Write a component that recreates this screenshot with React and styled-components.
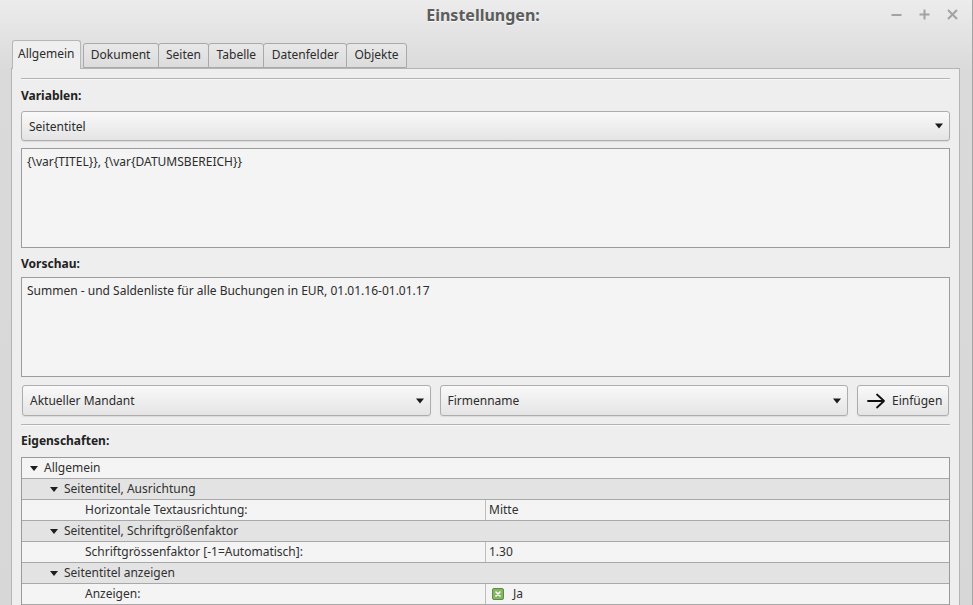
import React from 'react';
import styled, { createGlobalStyle } from 'styled-components';

const GlobalStyle = createGlobalStyle`
  html, body {
    margin: 0;
    padding: 0;
    background: #d6d6d6;
  }
  body {
    font-family: 'Noto Sans', 'DejaVu Sans', sans-serif;
    font-size: 12px;
    color: #303030;
  }
`;

const Window = styled.div`
  width: 972px;
  height: 605px;
  overflow: hidden;
  display: flex;
  flex-direction: column;
  border-right: 1px solid #a3a3a3;
  background: linear-gradient(#ececec, #dadada 70px, #d7d7d7);
`;

const TitleBar = styled.div`
  position: relative;
  height: 29px;
  display: flex;
  align-items: center;
  justify-content: center;
  flex-shrink: 0;
`;

const Title = styled.div`
  font-size: 16px;
  font-weight: 700;
  color: #5c5c5c;
  text-shadow: 0 1px 0 rgba(255, 255, 255, 0.7);
  margin-left: -6px;
`;

const Controls = styled.div`
  position: absolute;
  right: 14px;
  top: 9px;
  display: flex;
  gap: 17px;
`;

const Body = styled.div`
  flex: 1;
  padding: 11px 12px 0 11px;
  display: flex;
  flex-direction: column;
  min-height: 0;
`;

const TabBar = styled.div`
  display: flex;
  align-items: flex-end;
  height: 28px;
  padding-left: 1px;
  position: relative;
  z-index: 1;
`;

const Tab = styled.div`
  box-sizing: border-box;
  height: ${(p) => (p.active ? '29px' : '25px')};
  margin-bottom: ${(p) => (p.active ? '-1px' : '0')};
  margin-right: ${(p) => (p.active ? '2px' : '-1px')};
  padding: ${(p) => (p.active ? '4px 5px 0' : '2px 7.3px 0')};
  border: 1px solid ${(p) => (p.active ? '#b6b6b6' : '#a9a9a9')};
  border-bottom: ${(p) => (p.active ? 'none' : '1px solid #a9a9a9')};
  border-radius: 3px 3px 0 0;
  background: ${(p) =>
    p.active ? '#efefef' : 'linear-gradient(#e8e8e8, #dcdcdc)'};
  color: #2c2c2c;
  line-height: 18px;
  white-space: nowrap;
`;

const Panel = styled.div`
  flex: 1;
  border: 1px solid #b4b4b4;
  border-bottom: none;
  background: #eeeeee;
  padding: 9px 9px 0;
  display: flex;
  flex-direction: column;
  min-height: 0;
`;

const Separator = styled.div`
  height: 1px;
  background: #b4b4b4;
  box-shadow: 0 1px 0 #f8f8f8;
  flex-shrink: 0;
`;

const Label = styled.div`
  font-weight: 700;
  color: #222;
  line-height: 16px;
  padding: ${(p) => p.pad || '9px 0 7px'};
`;

const Combo = styled.div`
  box-sizing: border-box;
  flex: ${(p) => (p.grow ? 1 : 'none')};
  height: ${(p) => p.h || '30px'};
  display: flex;
  align-items: center;
  justify-content: space-between;
  padding: 0 5px 0 7px;
  border: 1px solid #adadad;
  border-radius: 3px;
  background: linear-gradient(#f9f9f9, #e4e4e4);
  box-shadow: 0 1px 1px rgba(0, 0, 0, 0.08);
  color: #2c2c2c;
`;

const TextBox = styled.div`
  box-sizing: border-box;
  height: 100px;
  margin-top: ${(p) => p.mt || '0'};
  border: 1px solid #9c9c9c;
  background: #f4f4f4;
  padding: 5px 5px;
  line-height: 16px;
  color: #2c2c2c;
`;

const InsertRow = styled.div`
  display: flex;
  gap: 9px;
  margin: 8px 0 8px;
  height: 31px;
  padding-right: 1px;
  padding-left: 1px;
`;

const Button = styled.div`
  box-sizing: border-box;
  width: 92px;
  display: flex;
  align-items: center;
  gap: 6px;
  padding-left: 9px;
  border: 1px solid #adadad;
  border-radius: 3px;
  background: linear-gradient(#f9f9f9, #e4e4e4);
  box-shadow: 0 1px 1px rgba(0, 0, 0, 0.08);
  color: #2c2c2c;
`;

const Tree = styled.div`
  border: 1px solid #9a9a9a;
  border-bottom: none;
  background: #f4f4f4;
`;

const Row = styled.div`
  box-sizing: border-box;
  height: 21px;
  display: flex;
  border-bottom: 1px solid #a8a8a8;
  background: ${(p) => (p.group ? '#e3e3e3' : '#f4f4f4')};
  line-height: 20px;
`;

const NameCell = styled.div`
  box-sizing: border-box;
  width: ${(p) => (p.full ? 'auto' : '463px')};
  flex: ${(p) => (p.full ? 1 : 'none')};
  display: flex;
  align-items: center;
  padding-left: ${(p) => p.indent}px;
  white-space: nowrap;
`;

const ValueCell = styled.div`
  flex: 1;
  display: flex;
  align-items: center;
  gap: 9px;
  padding-left: ${(p) => (p.check ? '6px' : '3px')};
  border-left: 1px solid #bdbdbd;
`;

const Expander = styled.span`
  width: 0;
  height: 0;
  border-left: 4.5px solid transparent;
  border-right: 4.5px solid transparent;
  border-top: 5px solid #1e1e1e;
  margin-right: 6px;
`;

const DropArrow = () => (
  <svg width="10" height="6" viewBox="0 0 10 6">
    <path d="M1 0.5 H9 L5 5.5 Z" fill="#1a1a1a" />
  </svg>
);

const ArrowRight = () => (
  <svg width="19" height="16" viewBox="0 0 19 16">
    <path
      d="M1 8 H17 M10 1.5 L17 8 L10 14.5"
      stroke="#111"
      strokeWidth="1.8"
      fill="none"
      strokeLinecap="round"
      strokeLinejoin="round"
    />
  </svg>
);

const CheckBox = () => (
  <svg width="12" height="12" viewBox="0 0 12 12">
    <rect x="0.5" y="0.5" width="11" height="11" rx="1.5" fill="#86b664" stroke="#5e8b45" />
    <path d="M4 4 L8 8 M8 4 L4 8" stroke="#fff" strokeWidth="1.6" strokeLinecap="round" />
  </svg>
);

const WinIcon = ({ kind }) => (
  <svg width="11" height="11" viewBox="0 0 11 11">
    {kind === 'min' && <path d="M0.5 6 H10.5" stroke="#a2a2a2" strokeWidth="2" />}
    {kind === 'max' && <path d="M0.5 5.5 H10.5 M5.5 0.5 V10.5" stroke="#a2a2a2" strokeWidth="2" />}
    {kind === 'close' && (
      <path d="M1 1 L10 10 M10 1 L1 10" stroke="#a2a2a2" strokeWidth="2" />
    )}
  </svg>
);

const TABS = ['Allgemein', 'Dokument', 'Seiten', 'Tabelle', 'Datenfelder', 'Objekte'];

const TREE = [
  { name: 'Allgemein', level: 0 },
  { name: 'Seitentitel, Ausrichtung', level: 1 },
  { name: 'Horizontale Textausrichtung:', level: 2, value: 'Mitte' },
  { name: 'Seitentitel, Schriftgrößenfaktor', level: 1 },
  { name: 'Schriftgrössenfaktor [-1=Automatisch]:', level: 2, value: '1.30' },
  { name: 'Seitentitel anzeigen', level: 1 },
  { name: 'Anzeigen:', level: 2, value: 'Ja', check: true },
];

const App = () => (
  <>
    <GlobalStyle />
    <Window>
      <TitleBar>
        <Title>Einstellungen:</Title>
        <Controls>
          <WinIcon kind="min" />
          <WinIcon kind="max" />
          <WinIcon kind="close" />
        </Controls>
      </TitleBar>
      <Body>
        <TabBar>
          {TABS.map((t, i) => (
            <Tab key={t} active={i === 0}>
              {t}
            </Tab>
          ))}
        </TabBar>
        <Panel>
          <Separator />
          <Label>Variablen:</Label>
          <Combo>
            Seitentitel
            <DropArrow />
          </Combo>
          <TextBox mt="7px">{'{\\var{TITEL}}, {\\var{DATUMSBEREICH}}'}</TextBox>
          <Label pad="8px 0 5px">Vorschau:</Label>
          <TextBox>Summen - und Saldenliste für alle Buchungen in EUR, 01.01.16-01.01.17</TextBox>
          <InsertRow>
            <Combo grow h="31px">
              Aktueller Mandant
              <DropArrow />
            </Combo>
            <Combo grow h="31px">
              Firmenname
              <DropArrow />
            </Combo>
            <Button>
              <ArrowRight />
              Einfügen
            </Button>
          </InsertRow>
          <Separator />
          <Label pad="8px 0 8px">Eigenschaften:</Label>
          <Tree>
            {TREE.map((r) => {
              const isGroup = r.value === undefined;
              return (
                <Row key={r.name} group={r.level === 1}>
                  <NameCell full={isGroup} indent={8 + r.level * 20 + (isGroup ? 0 : 15)}>
                    {isGroup && <Expander />}
                    {r.name}
                  </NameCell>
                  {!isGroup && (
                    <ValueCell check={r.check}>
                      {r.check && <CheckBox />}
                      {r.value}
                    </ValueCell>
                  )}
                </Row>
              );
            })}
          </Tree>
        </Panel>
      </Body>
    </Window>
  </>
);

export default App;
